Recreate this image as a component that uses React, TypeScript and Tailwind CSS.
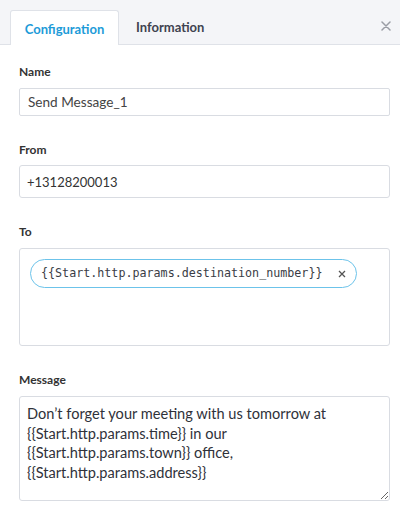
import { useState } from "react"

export default function App() {
  const [name, setName] = useState("Send Message_1")
  const [from, setFrom] = useState("+13128200013")
  const [message, setMessage] = useState(
    "Don’t forget your meeting with us tomorrow at {{Start.http.params.time}} in our {{Start.http.params.town}} office, {{Start.http.params.address}}"
  )

  return (
    <div className="w-[400px] h-[511px] bg-white overflow-hidden font-['Lato','Open_Sans',sans-serif] text-[#333]">
      {/* tabs */}
      <div className="relative h-[45px] bg-[#f4f5f8] border-b border-[#dfe2e8] flex items-end pl-[10px]">
        <div className="h-[35px] w-[109px] -mb-px pt-[3px] bg-white border border-b-0 border-[#dfe2e8] rounded-t-[3px] flex items-center justify-center text-[13px] font-bold text-[#1d9bd8]">
          Configuration
        </div>
        <div className="h-[35px] ml-[17px] pt-[3px] flex items-center text-[13px] font-bold text-[#3f4350]">
          Information
        </div>
        <button className="absolute right-[9px] top-[21px] text-[#9a9da5]">
          <svg width="10" height="10" viewBox="0 0 10 10" stroke="currentColor" strokeWidth="1.5" strokeLinecap="round">
            <path d="M1 1l8 8M9 1l-8 8" />
          </svg>
        </button>
      </div>

      <div className="px-[19px] pr-[10px]">
        <label className="block mt-[19px] mb-[8px] text-[12px] leading-[16px] font-bold text-[#333]">Name</label>
        <input
          value={name}
          onChange={(e) => setName(e.target.value)}
          className="block w-full h-[28px] px-[8px] border border-[#d9dce2] rounded-[2px] text-[13.6px] text-[#444] outline-none"
        />

        <label className="block mt-[26px] mb-[7px] text-[12px] leading-[16px] font-bold text-[#333]">From</label>
        <input
          value={from}
          onChange={(e) => setFrom(e.target.value)}
          className="block w-full h-[33px] px-[7px] border border-[#d9dce2] rounded-[3px] text-[13px] text-[#333] outline-none"
        />

        <label className="block mt-[26px] mb-[8px] text-[12px] leading-[16px] font-bold text-[#333]">To</label>
        <div className="h-[98px] border border-[#d9dce2] rounded-[3px] px-[10px] pt-[10px]">
          <span className="inline-flex items-center h-[29px] pl-[10px] pr-[10px] border border-[#6cc3ea] rounded-full font-['DejaVu_Sans_Mono',monospace] text-[11.7px] text-[#3a3d45]">
            {"{{Start.http.params.destination_number}}"}
            <svg className="ml-[16px] text-[#555]" width="8" height="8" viewBox="0 0 8 8" stroke="currentColor" strokeWidth="1.3">
              <path d="M1 1l6 6M7 1l-6 6" />
            </svg>
          </span>
        </div>

        <label className="block mt-[26px] mb-[8px] text-[12px] leading-[16px] font-bold text-[#333]">Message</label>
        <textarea
          value={message}
          onChange={(e) => setMessage(e.target.value)}
          className="block w-full h-[105px] px-[7px] pt-[7px] border border-[#d9dce2] rounded-[3px] text-[14.6px] leading-[19.5px] text-[#2f323a] outline-none resize-y"
        />
      </div>
    </div>
  )
}
